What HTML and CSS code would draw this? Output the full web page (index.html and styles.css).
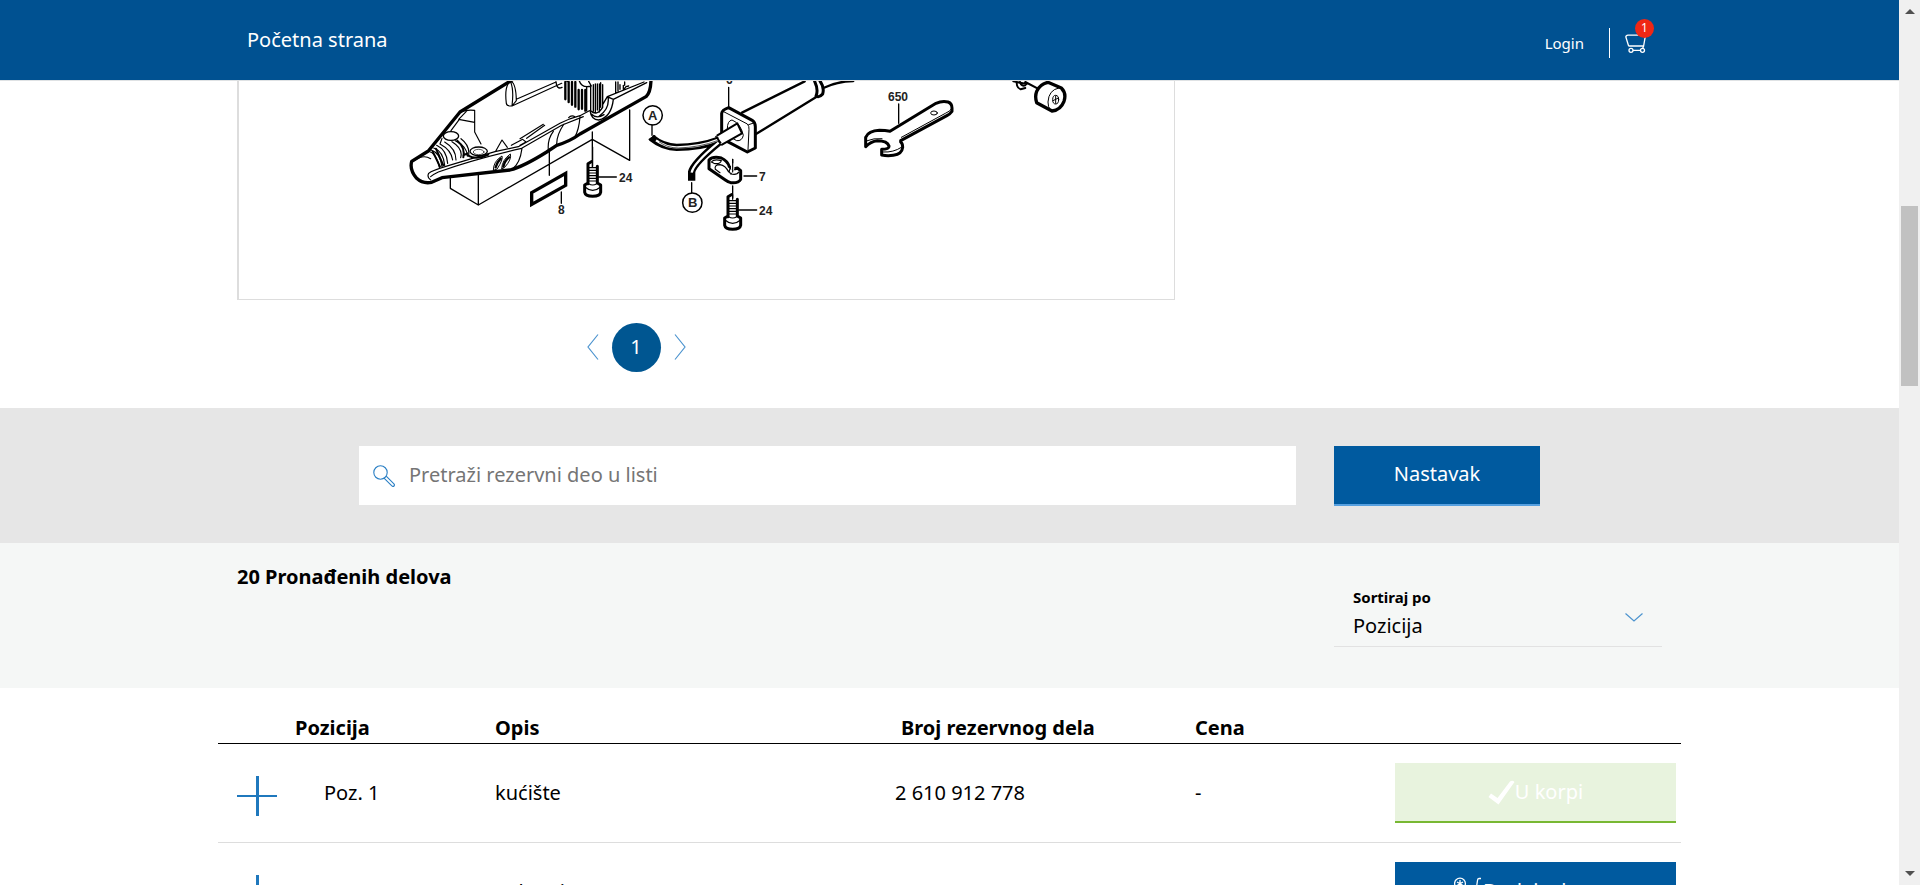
FILE: index.html
```html
<!DOCTYPE html>
<html lang="sr-Latn">
<head>
<meta charset="utf-8">
<title>Rezervni delovi</title>
<link rel="stylesheet" href="styles.css">
</head>
<body>
<div class="page">
  <header class="topbar">
    <nav class="topbar-inner">
      <a class="home" href="#">Početna strana</a>
      <div class="account">
        <a class="login" href="#">Login</a>
        <a class="cart" href="#" aria-label="Korpa">
          <svg width="22" height="20" viewBox="0 0 22 20" fill="none" stroke="#fff" stroke-width="1.3"><path d="M.7 3.5Q1 1.2 3 1.2H20.5L18.6 12H4.2Q3.400 12 3 10L1 3.500M18.600 12 17.500 15M8 16.300H15"/><circle cx="6" cy="16.300" r="2"/><circle cx="17.500" cy="16.300" r="2"/></svg>
          <span class="badge">1</span>
        </a>
      </div>
    </nav>
  </header>

  <main>
    <section class="drawing">
      <div class="frame">
        <svg class="exploded" viewBox="239 81 935 218" fill="none" stroke="#000" stroke-linejoin="round" stroke-linecap="round">
          <g transform="translate(380 70) scale(.33333)">
            <!-- housing -->
            <path stroke-width="10" d="M396 30 240 126 145 243 95 274Q88 300 110 325 128 342 155 337L186 323 390 300Q430 290 500 246L530 226Q570 214 600 192L798 80Q812 68 813 30"/>
            <path stroke-width="3.500" d="M390 33Q408 36 409 92L396 108Q380 109 379 100Q374 60 384 42M396 108Q402 60 392 36M409 88 528 36M396 108 545 40M240 126Q262 118 284 121V186L303 222M284 157 236 148 262 121M213 182 238 148M145 243Q170 250 178 292M153 240Q180 248 186 290M161 234Q190 244 194 286M170 226Q200 240 203 280M102 272Q130 252 152 266M146 310Q155 302 205 287L345 245 415 230 540 160Q566 146 600 137L628 122M152 320Q162 312 175 306 280 268 425 235L545 166 610 140M146 310Q140 322 152 330M346 245 366 210 382 232M394 226 428 208 438 216 420 226M440 205 494 166M420 206 490 163M426 235Q420 280 398 296M520 184Q502 208 505 240M552 162Q530 194 530 222M600 140Q597 180 584 202M566 143Q574 133 586 141M186 205 180 222Q214 240 218 270M194 216Q228 236 228 270M216 215Q250 236 242 263M226 212Q262 230 262 258M243 206Q270 226 266 256"/>
            <ellipse cx="213" cy="198" rx="23" ry="13" stroke-width="4"/><ellipse cx="296" cy="244" rx="26" ry="13" stroke-width="4"/><ellipse cx="296" cy="246" rx="16" ry="8" stroke-width="2"/>
            <path stroke-width="6" d="M263 256Q290 272 325 254M262 250 250 256M158 244 180 290M168 236 190 286M232 212Q256 232 250 262"/>
            <path stroke-width="3" d="M340 300Q340 274 366 258Q370 268 352 296ZM365 296Q366 270 391 252Q396 268 374 292Z"/>
            <path stroke-width="7" d="M347 292Q350 278 362 266M370 290Q374 272 387 262M556 36V88M566 36V96M576 36V104M586 36V110M596 60V118M606 60V116M616 60V122"/>
            <path stroke-width="4" d="M528 36Q530 60 546 52M552 30 566 36M598 33Q606 56 634 48L626 34M632 46V122Q650 140 668 112V44M640 44V124M646 42V128M652 42V120M658 42V126M662 38V112M620 50V122M630 122Q634 150 656 150Q694 142 700 88L682 80 668 104M634 132Q650 148 672 134M684 80Q690 116 658 138M700 88 800 38M682 80 792 36M707 36V68M714 36V64M720 44V58M730 46V60L738 50 746 48M734 36V46"/>
            <!-- leader lines -->
            <path stroke-width="4" d="M211 320V355L295 405 637 208 749 271V120M295 312V405M508 238V316M637 186V290M544 366V400M656 321H709"/>
            <path stroke-width="10" stroke-linejoin="miter" d="M455 368 557 310V346L455 403Z"/>
          </g>
          <g transform="translate(640 70) scale(.33333)">
            <!-- cord sleeve -->
            <path stroke-width="7" d="M306 128 494 34M348 192 530 80M550 54Q590 34 640 33"/>
            <path stroke-width="9" d="M524 34Q536 60 528 78Q538 84 548 72Q554 52 540 33"/>
            <path stroke-width="4" d="M266 52V110M36 165V196M155 338V368M278 268V304M312 318H350M278 348V384M296 420H350"/>
            <!-- bush plate and cables -->
            <path fill="#fff" stroke-width="9" d="M245 130Q246 120 266 113L338 152Q346 158 346 170V234L322 246 250 208Q245 204 245 196Z"/>
            <path stroke-width="3" d="M249 124 322 162Q328 168 327 178L324 240M326 164 344 158M262 176Q262 152 276 150Q302 160 310 196Q306 214 290 212Q276 206 266 194"/>
            <path fill="#fff" stroke-width="6" d="M232 196 292 160 306 190 246 224"/>
            <path stroke-width="22" stroke-linecap="butt" d="M34 203Q70 232 110 232 180 232 238 210M155 332V306Q160 280 238 216"/>
            <path stroke="#fff" stroke-width="7" stroke-linecap="butt" d="M48 211Q78 232 110 232 180 232 236 209M155 308Q160 280 236 218"/>
            <path stroke-width="2" d="M58 216Q82 234 115 234 180 232 232 212"/>
            <path stroke-width="5" d="M28 208 44 198M228 200 242 218"/>
            <!-- clamp -->
            <path fill="#fff" stroke-width="9" d="M207 296V270Q218 258 244 264 262 272 268 290 276 300 292 294L302 302V328Q296 340 272 338Q264 336 256 330Z"/>
            <path stroke="#fff" stroke-width="10" d="M278 284V296"/>
            <path stroke-width="3.500" d="M278 268V306M296 306Q292 316 272 312M266 306Q256 286 240 284Q222 284 226 298L240 308M214 276Q222 266 244 272 240 284 222 280ZM270 296Q264 310 274 310"/>
            <!-- lower screw -->
            <path fill="#fff" stroke-width="9" d="M264 440V380L274 374M292 388V438L302 444V466Q300 478 278 478T254 466V444L264 438"/>
            <path stroke-width="3.500" d="M255 450Q266 460 278 460T302 450M266 392H290M266 400H290M266 408H290M266 416H290M266 424H290M266 432H290M266 440Q278 448 290 440M278 374V388"/>
            <circle cx="38" cy="136" r="29" stroke-width="4.500"/><circle cx="157" cy="398" r="29" stroke-width="4.500"/>
          </g>
          <g transform="translate(500 37) scale(.33333)">
            <!-- upper screw -->
            <path fill="#fff" stroke-width="9" d="M264 440V380L274 374M292 388V438L302 444V466Q300 478 278 478T254 466V444L264 438"/>
            <path stroke-width="3.500" d="M255 450Q266 460 278 460T302 450M266 392H290M266 400H290M266 408H290M266 416H290M266 424H290M266 432H290M266 440Q278 448 290 440M278 330V388"/>
          </g>
          <g transform="translate(840 70) scale(.33333)">
            <!-- wrench and cap -->
            <path stroke-width="4" d="M176 102V160"/>
            <path fill="#fff" stroke-width="9" d="M77 230V202Q86 182 118 181 136 181 150 184L288 100Q306 92 324 96 336 100 336 114V124Q330 132 322 136L182 212V216Q188 220 188 232Q186 252 160 256 142 259 125 255V238Q148 238 147 228 142 212 112 212 92 214 77 230Z"/>
            <path stroke-width="3" d="M184 202 316 130Q332 124 336 114M82 212Q100 204 126 206M130 246Q160 248 184 232"/>
            <ellipse cx="282" cy="129" rx="10" ry="6" stroke-width="3"/>
            <path stroke-width="6" d="M520 34 560 42M556 36 598 58"/><path stroke-width="6" d="M530 38Q530 54 542 58L556 54M540 36Q544 50 556 46"/>
            <path fill="#fff" stroke-width="10" d="M590 64Q600 42 624 37L664 54Q680 70 672 94 662 120 636 123L590 98Q584 80 590 64Z"/>
            <path stroke-width="3" d="M656 54Q626 60 624 96Q624 112 630 118"/>
            <ellipse cx="647" cy="89" rx="9" ry="13" stroke-width="3"/><path stroke-width="3" d="M639 92 655 84M647 78V100"/>
          </g>
          <g class="part-no">
            <text x="619" y="182">24</text><text x="759" y="215">24</text><text x="759" y="181">7</text><text x="558" y="214">8</text><text x="888" y="101">650</text><text x="726" y="84">6</text>
            <text class="letter" x="648" y="120">A</text><text class="letter" x="688" y="207">B</text>
          </g>
        </svg>
      </div>
      <nav class="pager" aria-label="Stranice">
        <button class="arrow" aria-label="Prethodna"><svg width="12" height="26" viewBox="0 0 12 26"><path d="M11 .5 1 13 11 25.500"/></svg></button>
        <button class="current">1</button>
        <button class="arrow" aria-label="Sledeća"><svg width="12" height="26" viewBox="0 0 12 26"><path d="M1 .5 11 13 1 25.500"/></svg></button>
      </nav>
    </section>

    <section class="search-band">
      <form class="search">
        <label class="field">
          <svg width="22" height="22" viewBox="0 0 22 22" fill="none" stroke="#2a7fc4" stroke-width="1.100"><circle cx="7.500" cy="7.500" r="6.700"/><path d="M11 13.200 18.600 20.700Q20 22 21 21 22 20 20.700 18.600L13.200 11.200"/></svg>
          <input type="text" placeholder="Pretraži rezervni deo u listi" aria-label="Pretraži rezervni deo u listi">
        </label>
        <button class="btn go" type="button">Nastavak</button>
      </form>
    </section>

    <section class="sort-band">
      <div class="sort-inner">
        <h2>20 Pronađenih delova</h2>
        <div class="sort">
          <label for="sort">Sortiraj po</label>
          <select id="sort"><option>Pozicija</option></select>
          <svg class="chevron" width="18" height="9" viewBox="0 0 18 9"><path d="M.5 .5 9 8 17.500 .5"/></svg>
        </div>
      </div>
    </section>

    <section class="parts">
      <table>
        <colgroup><col class="c-plus"><col class="c-pos"><col><col class="c-num"><col class="c-price"><col class="c-action"></colgroup>
        <thead><tr><th></th><th>Pozicija</th><th>Opis</th><th class="num">Broj rezervnog dela</th><th>Cena</th><th></th></tr></thead>
        <tbody>
          <tr>
            <td class="toggle"><button class="plus" aria-label="Detalji"></button></td>
            <td class="pos">Poz. 1</td><td>kućište</td><td>2 610 912 778</td><td>-</td>
            <td class="action"><button class="btn added" disabled><svg width="27" height="25" viewBox="0 0 27 25"><path fill="#fff" d="M.5 17 3 13.500 9.500 18 22 1.500Q24.500 0 26.500 2L10.500 24.500Z"/></svg>U korpi</button></td>
          </tr>
          <tr>
            <td class="toggle"><button class="plus" aria-label="Detalji"></button></td>
            <td class="pos"></td><td>nalepnica</td><td></td><td></td>
            <td class="action"><button class="btn"><svg width="29" height="28" viewBox="0 0 29 28" fill="none" stroke="#fff" stroke-width="1.300"><circle cx="6" cy="6.500" r="5.400"/><path d="M6 3V10M3 5 9 8.500M9 5 3 8.500M27 1.500H25Q23.500 1.500 23.500 3.500L21 20H6L3 13"/><circle cx="8" cy="24" r="2"/><circle cx="19" cy="24" r="2"/></svg>Dodaj u korpu</button></td>
          </tr>
        </tbody>
      </table>
    </section>
  </main>
</div>
<div class="scrollbar" aria-hidden="true">
  <svg width="10" height="5" viewBox="0 0 10 5"><path d="M5 0 10 5H0Z"/></svg>
  <span class="thumb"></span>
  <svg width="10" height="5" viewBox="0 0 10 5"><path d="M0 0H10L5 5Z"/></svg>
</div>
</body>
</html>
```
FILE: styles.css
```css
* { box-sizing: border-box; }
body {
  margin: 0;
  height: 100vh;
  display: flex;
  overflow: hidden;
  background: #fff;
  color: #000;
  font: 20px/28px "Noto Sans", sans-serif;
}
button, input, select { font: inherit; color: inherit; border: 0; padding: 0; margin: 0; background: none; }
a { color: inherit; text-decoration: none; }
svg { display: block; flex: none; }

.page { flex: 1; min-width: 0; overflow: hidden; }

.topbar { background: #005191; color: #fff; border-bottom: 1px solid #dfe2e4; }
.topbar-inner { max-width: 1425px; height: 80px; margin: 0 auto; padding: 0 15px 0 10px; display: flex; justify-content: space-between; align-items: center; }
.account { display: flex; align-items: center; padding-top: 5px; }
.login { font-size: 15px; padding-right: 25px; line-height: 30px; border-right: 1px solid #fff; }
.cart { position: relative; margin-left: 15px; padding-top: 2px; }
.badge { position: absolute; left: 10px; top: -13px; width: 19px; height: 19px; border-radius: 50%; background: #ef2715; font-size: 12px; line-height: 18px; text-align: center; }

.drawing { max-width: 1425px; margin: 0 auto; padding-bottom: 36px; }
.frame { max-width: 938px; border: solid #ddd; border-width: 0 1px 1px 2px; }
.exploded { width: 100%; }
.part-no { fill: #222; stroke: none; font: bold 12px "Liberation Sans", sans-serif; }
.letter { font-size: 13px; }
.pager { max-width: 798px; padding-top: 23px; display: flex; justify-content: center; align-items: center; gap: 13px; }
.arrow { padding-bottom: 2px; }
.arrow path, .chevron path { fill: none; stroke: #4d94cf; stroke-width: 1.2; }
.current { width: 49px; height: 49px; padding-bottom: 2px; border-radius: 50%; background: #005691; color: #fff; }

.search-band { background: #e6e6e6; padding: 38px 0 37px; }
.search { max-width: 1181px; margin: 0 auto; display: flex; align-items: flex-start; gap: 38px; }
.field { flex: 1; height: 59px; display: flex; align-items: center; gap: 14px; padding: 0 14px; background: #fff; }
.field input { flex: 1; height: 58px; padding-bottom: 2px; outline: 0; }
.field input::placeholder { color: #757575; opacity: 1; }
.btn { height: 60px; width: 100%; display: flex; justify-content: center; align-items: center; background: #005a9f; color: #fff; border-bottom: 2px solid #56a0e0; }
.go { width: 206px; padding-bottom: 2px; }

.sort-band { background: #f5f7f6; }
.sort-inner { max-width: 1425px; margin: 0 auto; padding: 20px 0 41px; display: flex; justify-content: space-between; }
h2 { margin: 0; font-size: 20px; line-height: 28px; }
.sort { position: relative; width: 328px; margin-top: 21px; display: flex; flex-direction: column; border-bottom: 1px solid #e2e2e2; }
.sort label { padding: 0 19px; font-size: 15px; line-height: 26px; font-weight: bold; }
.sort select { appearance: none; padding: 0 19px; height: 36px; padding-bottom: 4px; }
.chevron { position: absolute; right: 19px; top: 29px; }

.parts { max-width: 1463px; margin: 0 auto; }
table { width: 100%; table-layout: fixed; border-spacing: 0; }
.c-plus { width: 77px; }
.c-pos { width: 200px; }
.c-num { width: 300px; }
.c-price { width: 200px; }
.c-action { width: 286px; }
th { height: 56px; padding: 24px 0 0; text-align: left; line-height: 31px; vertical-align: top; border-bottom: 1px solid #000; }
.num { padding-left: 6px; }
td { height: 99px; padding: 0; border-bottom: 1px solid #ddd; }
.pos { padding-left: 29px; }
.toggle { padding: 6px 0 0 19px; }
.action { padding: 0 5px 0 0; }
.plus { display: block; width: 40px; height: 40px; background: linear-gradient(#1f78bd, #1f78bd) center / 3px 100% no-repeat, linear-gradient(#1f78bd, #1f78bd) center / 100% 2px no-repeat; }
.added { background: #e8f3de; border-color: #78b833; }

.scrollbar { width: 21px; height: 100vh; padding: 9px 0; display: flex; flex-direction: column; align-items: center; justify-content: space-between; background: #f0f0f0; fill: #505050; }
.thumb { width: 17px; height: 180px; margin-bottom: 294px; background: #c1c1c1; }
```
